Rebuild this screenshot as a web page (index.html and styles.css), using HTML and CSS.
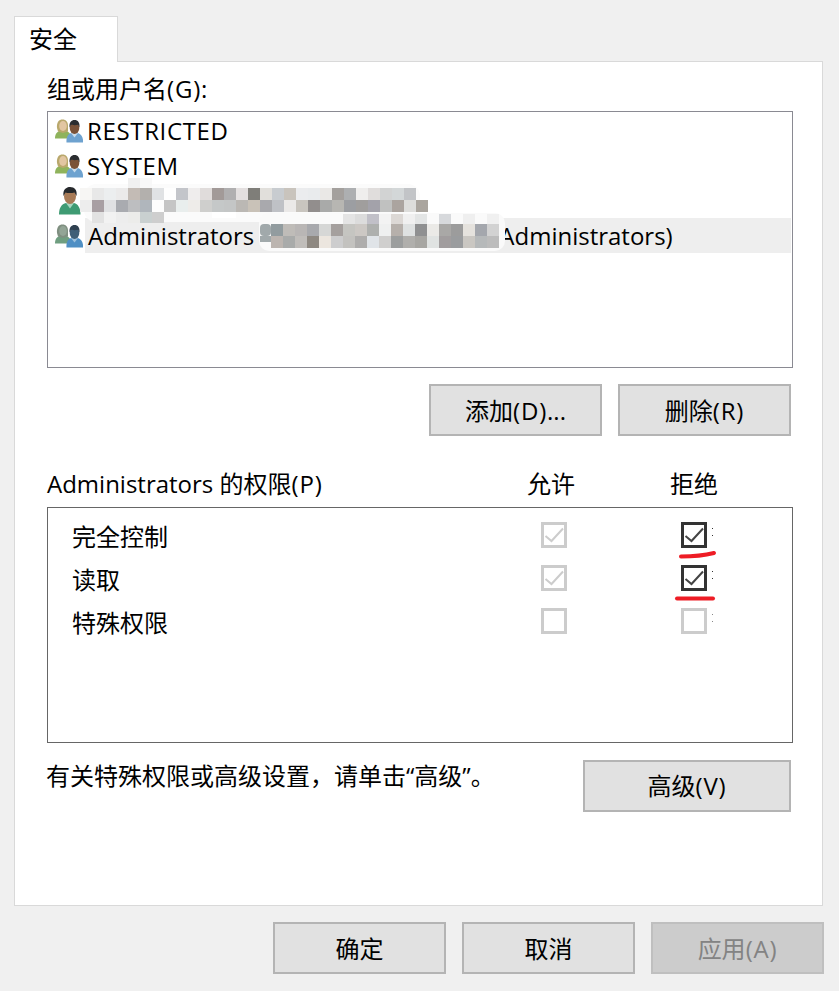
FILE: index.html
```html
<!DOCTYPE html>
<html lang="zh-CN">
<head>
  <meta charset="UTF-8">
  <title>安全</title>
  <link rel="stylesheet" href="styles.css">
</head>
<body>

<svg class="defs" width="0" height="0">
  <symbol id="icon-group" viewBox="0 0 28 24">
    <path class="body-a" d="M0 19.500C0 15 2 12.500 5 12L11 12C14 12.500 16 15 16 19.500Z"/>
    <path class="hair-a" d="M2 9C1.500 3 4 .5 7.500 .5C11 .5 13.500 3 13 8L13 12.500L8 14L3 12.500Z"/>
    <ellipse class="skin-a" cx="8" cy="7" rx="3.800" ry="5"/>
    <path class="body-b" d="M11.500 23.500C11 18.500 13 15 16 14L23 14C26.500 15 28.500 19 28 23.500Z"/>
    <path class="collar-b" d="M16 14L19.500 18.500L23 14Z"/>
    <ellipse class="skin-b" cx="19.500" cy="9" rx="4.800" ry="6"/>
    <path class="hair-b" d="M14.500 8.500C14 3 16.500 1 19.500 1C23 1 25 3.500 24.500 8.500L23 5.800C20 6.500 17 6 16 5.800Z"/>
  </symbol>
  <symbol id="icon-user" viewBox="0 0 22 28">
    <path d="M0 27.500C0 21 2.500 17 7 16L15 16C19 17 21.500 21 21.500 27.500Z" fill="#3f9b73"/>
    <path d="M7 16L11 21.500L15 16Z" fill="#a9d6bf"/>
    <ellipse cx="11" cy="9.500" rx="6" ry="7.500" fill="#a87b57"/>
    <path d="M4.500 9C3.500 2.500 7.500 0 11 0C15.500 0 18.500 3 17.500 9L15.500 5.500C12 6.500 8 6 6.500 5.500Z" fill="#26292c"/>
  </symbol>
</svg>

<div class="window">
  <div class="tabs">
    <div class="tab">安全</div>
  </div>

  <div class="panel">
    <div class="label">组或用户名<span class="key">(G)</span>:</div>

    <div class="listbox">
      <div class="row">
        <svg class="icon"><use href="#icon-group"/></svg>
        <span class="caps">RESTRICTED</span>
      </div>
      <div class="row">
        <svg class="icon"><use href="#icon-group"/></svg>
        <span class="caps">SYSTEM</span>
      </div>
      <div class="row">
        <svg class="icon-single"><use href="#icon-user"/></svg>
      </div>
      <div class="row selected">
        <svg class="icon dimmed"><use href="#icon-group"/></svg>
        <span class="name">Administrators</span>
        <span class="name-tail">Administrators)</span>
      </div>

      <!-- mosaic over the user names, coordinates are page pixels -->
      <svg class="mosaic" width="745" height="255" viewBox="48 112 745 255" shape-rendering="crispEdges">
        <rect x="84" y="184" width="336" height="38" rx="12" fill="#fbfbfb" shape-rendering="auto"/>
        <rect x="259" y="213" width="246" height="38" rx="10" fill="#fafafa" shape-rendering="auto"/>
        <rect x="128" y="178" width="12" height="10" fill="#f0f0f0"/>
        <rect x="140" y="178" width="12" height="10" fill="#f8f8f8"/>
        <g>
          <rect x="80" y="188" width="12" height="12" fill="#f7f6f4"/>
          <rect x="92" y="188" width="12" height="12" fill="#e8e8e8"/>
          <rect x="104" y="188" width="12" height="12" fill="#eceeef"/>
          <rect x="116" y="188" width="12" height="12" fill="#ebeaea"/>
          <rect x="128" y="188" width="12" height="12" fill="#c3bbb5"/>
          <rect x="140" y="188" width="12" height="12" fill="#b3b0ad"/>
          <rect x="152" y="188" width="12" height="12" fill="#e0e2e4"/>
          <rect x="164" y="188" width="12" height="12" fill="#fefefe"/>
          <rect x="176" y="188" width="12" height="12" fill="#c3c5ca"/>
          <rect x="188" y="188" width="12" height="12" fill="#efeded"/>
          <rect x="200" y="188" width="12" height="12" fill="#e0dcdb"/>
          <rect x="212" y="188" width="12" height="12" fill="#a29a98"/>
          <rect x="224" y="188" width="12" height="12" fill="#b0afb0"/>
          <rect x="236" y="188" width="12" height="12" fill="#e3dfdf"/>
          <rect x="248" y="188" width="12" height="12" fill="#7f7e79"/>
          <rect x="260" y="188" width="12" height="12" fill="#e1dfdb"/>
          <rect x="272" y="188" width="12" height="12" fill="#c8ccd0"/>
          <rect x="284" y="188" width="12" height="12" fill="#c9c4bd"/>
          <rect x="296" y="188" width="12" height="12" fill="#ebecee"/>
          <rect x="308" y="188" width="12" height="12" fill="#e9ebed"/>
          <rect x="320" y="188" width="12" height="12" fill="#eae8e6"/>
          <rect x="332" y="188" width="12" height="12" fill="#a4a09d"/>
          <rect x="344" y="188" width="12" height="12" fill="#adafb1"/>
          <rect x="356" y="188" width="12" height="12" fill="#efeeed"/>
          <rect x="368" y="188" width="12" height="12" fill="#e0dddc"/>
          <rect x="380" y="188" width="12" height="12" fill="#d2d3d3"/>
          <rect x="392" y="188" width="12" height="12" fill="#d3d7d8"/>
          <rect x="404" y="188" width="12" height="12" fill="#c2c4c7"/>
        </g>
        <g>
          <rect x="80" y="200" width="12" height="12" fill="#ededed"/>
          <rect x="92" y="200" width="12" height="12" fill="#a89fa3"/>
          <rect x="104" y="200" width="12" height="12" fill="#e0e1e3"/>
          <rect x="116" y="200" width="12" height="12" fill="#a9abb0"/>
          <rect x="128" y="200" width="12" height="12" fill="#bdbec0"/>
          <rect x="140" y="200" width="12" height="12" fill="#b0b6bc"/>
          <rect x="152" y="200" width="12" height="12" fill="#fdfdfd"/>
          <rect x="164" y="200" width="12" height="12" fill="#c5c5c5"/>
          <rect x="176" y="200" width="12" height="12" fill="#e9eeed"/>
          <rect x="188" y="200" width="12" height="12" fill="#eeece9"/>
          <rect x="200" y="200" width="12" height="12" fill="#cfcfcd"/>
          <rect x="212" y="200" width="12" height="12" fill="#c5c8c8"/>
          <rect x="224" y="200" width="12" height="12" fill="#c4c6c6"/>
          <rect x="236" y="200" width="12" height="12" fill="#bbb8b4"/>
          <rect x="248" y="200" width="12" height="12" fill="#c9c2b8"/>
          <rect x="260" y="200" width="12" height="12" fill="#a9a9ad"/>
          <rect x="272" y="200" width="12" height="12" fill="#bfc1c6"/>
          <rect x="284" y="200" width="12" height="12" fill="#ebe9e8"/>
          <rect x="296" y="200" width="12" height="12" fill="#c9c5bf"/>
          <rect x="308" y="200" width="12" height="12" fill="#928e8d"/>
          <rect x="320" y="200" width="12" height="12" fill="#a9aaa9"/>
          <rect x="332" y="200" width="12" height="12" fill="#b7b6b2"/>
          <rect x="344" y="200" width="12" height="12" fill="#9c9ea2"/>
          <rect x="356" y="200" width="12" height="12" fill="#a09e9d"/>
          <rect x="368" y="200" width="12" height="12" fill="#a3a2aa"/>
          <rect x="380" y="200" width="12" height="12" fill="#c0c1c0"/>
          <rect x="392" y="200" width="12" height="12" fill="#aba49f"/>
          <rect x="404" y="200" width="12" height="12" fill="#dddddb"/>
          <rect x="416" y="200" width="12" height="12" fill="#aaa59e"/>
        </g>
        <g>
          <rect x="92" y="212" width="12" height="11" fill="#e2e2e2"/>
          <rect x="104" y="212" width="12" height="11" fill="#f2f2f2"/>
          <rect x="116" y="212" width="12" height="11" fill="#ededed"/>
          <rect x="128" y="212" width="12" height="11" fill="#ececea"/>
          <rect x="140" y="212" width="12" height="11" fill="#c9d0d0"/>
          <rect x="152" y="212" width="12" height="11" fill="#cecece"/>
          <rect x="212" y="212" width="24" height="6" fill="#ffffff"/>
        </g>
        <g>
          <rect x="343" y="214" width="12" height="10" fill="#e4e4e4"/>
          <rect x="355" y="214" width="12" height="10" fill="#dcdcdc"/>
          <rect x="367" y="214" width="12" height="10" fill="#c1c0c8"/>
          <rect x="379" y="214" width="12" height="10" fill="#f3f3f3"/>
          <rect x="391" y="214" width="12" height="10" fill="#dcd8d5"/>
          <rect x="403" y="214" width="12" height="10" fill="#f0f0f0"/>
          <rect x="415" y="214" width="12" height="10" fill="#e3e5e5"/>
          <rect x="439" y="214" width="12" height="10" fill="#d7d9dc"/>
          <rect x="463" y="214" width="12" height="10" fill="#efefef"/>
          <rect x="487" y="214" width="12" height="10" fill="#f0f0f0"/>
        </g>
        <g>
          <rect x="260" y="224" width="11" height="12" rx="4" fill="#a1a9ab" shape-rendering="auto"/>
          <rect x="271" y="224" width="12" height="12" fill="#929c9f"/>
          <rect x="283" y="224" width="12" height="12" fill="#bfbcb8"/>
          <rect x="295" y="224" width="12" height="12" fill="#b9b6b5"/>
          <rect x="307" y="224" width="12" height="12" fill="#a8a9ad"/>
          <rect x="319" y="224" width="12" height="12" fill="#d6d7d6"/>
          <rect x="331" y="224" width="12" height="12" fill="#a5a09e"/>
          <rect x="343" y="224" width="12" height="12" fill="#c5c5c1"/>
          <rect x="355" y="224" width="12" height="12" fill="#ccc8c4"/>
          <rect x="367" y="224" width="12" height="12" fill="#aeb0ae"/>
          <rect x="379" y="224" width="12" height="12" fill="#eff0f0"/>
          <rect x="391" y="224" width="12" height="12" fill="#b6b0ab"/>
          <rect x="403" y="224" width="12" height="12" fill="#dee1e1"/>
          <rect x="415" y="224" width="12" height="12" fill="#8f9091"/>
          <rect x="427" y="224" width="12" height="12" fill="#ebeae7"/>
          <rect x="439" y="224" width="12" height="12" fill="#a9a8a6"/>
          <rect x="451" y="224" width="12" height="12" fill="#9c9c9c"/>
          <rect x="463" y="224" width="12" height="12" fill="#e5e2dd"/>
          <rect x="475" y="224" width="12" height="12" fill="#a4a7ad"/>
          <rect x="487" y="224" width="12" height="12" fill="#d2d2d2"/>
        </g>
        <g>
          <rect x="260" y="236" width="11" height="6" fill="#a1a9ab"/>
          <rect x="271" y="236" width="12" height="12" fill="#bcb5b0"/>
          <rect x="283" y="236" width="12" height="12" fill="#a9abaa"/>
          <rect x="295" y="236" width="12" height="12" fill="#c0bdba"/>
          <rect x="307" y="236" width="12" height="12" fill="#8e8881"/>
          <rect x="319" y="236" width="12" height="12" fill="#ece6df"/>
          <rect x="331" y="236" width="12" height="12" fill="#cdcdce"/>
          <rect x="343" y="236" width="12" height="12" fill="#c3c2bf"/>
          <rect x="355" y="236" width="12" height="12" fill="#aeadac"/>
          <rect x="367" y="236" width="12" height="12" fill="#e0e4e8"/>
          <rect x="379" y="236" width="12" height="12" fill="#d0cfce"/>
          <rect x="391" y="236" width="12" height="12" fill="#9c9e9e"/>
          <rect x="403" y="236" width="12" height="12" fill="#b0afac"/>
          <rect x="415" y="236" width="12" height="12" fill="#a7a6a2"/>
          <rect x="427" y="236" width="12" height="12" fill="#e0e3e2"/>
          <rect x="439" y="236" width="12" height="12" fill="#a19d9e"/>
          <rect x="451" y="236" width="12" height="12" fill="#9a9c9e"/>
          <rect x="463" y="236" width="12" height="12" fill="#cac7c2"/>
          <rect x="475" y="236" width="12" height="12" fill="#b6b9ba"/>
          <rect x="487" y="236" width="12" height="12" fill="#bcbcbc"/>
        </g>
      </svg>
    </div>

    <div class="actions">
      <button class="btn">添加<span class="key">(D)</span>...</button>
      <button class="btn">删除<span class="key">(R)</span></button>
    </div>

    <div class="perm-head">
      <span>Administrators 的权限<span class="key">(P)</span></span>
      <span>允许</span>
      <span>拒绝</span>
    </div>

    <div class="perm-box">
      <div class="perm-row">
        <span class="perm-name">完全控制</span>
        <span class="check off"><svg viewBox="0 0 20 20"><path d="M1.500 11L7.500 16L19 3.500"/></svg></span>
        <span class="check on"><svg viewBox="0 0 20 20"><path d="M1.500 11L7.500 16L19 3.500"/></svg></span>
        <span class="dots"></span>
      </div>
      <div class="perm-row">
        <span class="perm-name">读取</span>
        <span class="check off"><svg viewBox="0 0 20 20"><path d="M1.500 11L7.500 16L19 3.500"/></svg></span>
        <span class="check on"><svg viewBox="0 0 20 20"><path d="M1.500 11L7.500 16L19 3.500"/></svg></span>
        <span class="dots"></span>
      </div>
      <div class="perm-row">
        <span class="perm-name">特殊权限</span>
        <span class="check off"></span>
        <span class="check off"></span>
        <span class="dots faint"></span>
      </div>

      <!-- red marks drawn over the screenshot -->
      <svg class="marks" width="745" height="235" viewBox="48 508 745 235">
        <path d="M681 556.500C693 556.500 704 555.500 714 553" fill="none" stroke="#ee1c25" stroke-width="4" stroke-linecap="round"/>
        <path d="M677 598.500L713 598.500" fill="none" stroke="#ee1c25" stroke-width="4" stroke-linecap="round"/>
      </svg>
    </div>

    <div class="advanced">
      <span class="advanced-text">有关特殊权限或高级设置，请单击“高级”。</span>
      <button class="btn wide">高级<span class="key">(V)</span></button>
    </div>
  </div>

  <div class="footer">
    <button class="btn">确定</button>
    <button class="btn">取消</button>
    <button class="btn disabled">应用<span class="key">(A)</span></button>
  </div>
</div>

</body>
</html>
```

FILE: styles.css
```css
html, body {
  margin: 0;
  height: 991px;
  overflow: hidden;
}
body {
  font-family: "Open Sans", "Noto Sans CJK SC", sans-serif;
  font-size: 24px;
  color: #000;
  background: #f0f0f0;
}
.defs {
  position: absolute;
}
.window {
  padding: 16px 15px 0 14px;
}
.tabs {
  display: flex;
}
.tab {
  position: relative;
  z-index: 1;
  width: 88px;
  height: 45px;
  padding-left: 14px;
  line-height: 43px;
  background: #fff;
  border: 1px solid #d9d9d9;
  border-bottom: none;
  margin-bottom: -1px;
}
.panel {
  height: 845px;
  box-sizing: border-box;
  margin-right: 1px;
  padding: 10px 29px 0 32px;
  background: #fff;
  border: 1px solid #d9d9d9;
}
.label {
  line-height: 34px;
  margin-bottom: 5px;
}
.key {
  letter-spacing: .8px;
}
.listbox {
  position: relative;
  height: 257px;
  box-sizing: border-box;
  padding-top: 1px;
  border: 1px solid #8a8a92;
}
.row {
  display: flex;
  align-items: center;
  height: 35px;
  padding-left: 7px;
  line-height: 35px;
  white-space: nowrap;
}
.row .icon {
  width: 28px;
  height: 24px;
  margin-right: 5px;
  flex: none;
}
.row .icon-single {
  width: 22px;
  height: 28px;
  margin-left: 4px;
}
.caps {
  margin-left: -1px;
  letter-spacing: .65px;
}
.icon {
  --body-a: #8fb35c;
  --hair-a: #b9a86c;
  --skin-a: #e2c6a2;
  --body-b: #6ea2cf;
  --collar-b: #c9dcec;
  --skin-b: #7a5238;
  --hair-b: #2b2d30;
}
.icon.dimmed {
  --body-a: #6f9e80;
  --hair-a: #7f8f80;
  --skin-a: #93a596;
  --body-b: #4f8fc4;
  --collar-b: #9cc0dc;
  --skin-b: #3f5f78;
  --hair-b: #2f4050;
}
.body-a { fill: var(--body-a); }
.hair-a { fill: var(--hair-a); }
.skin-a { fill: var(--skin-a); }
.body-b { fill: var(--body-b); }
.collar-b { fill: var(--collar-b); }
.skin-b { fill: var(--skin-b); }
.hair-b { fill: var(--hair-b); }
.selected {
  background: linear-gradient(to right, transparent 37px, #eee 37px);
  margin-right: 1px;
}
.name-tail {
  margin-left: 245px;
}
.mosaic {
  position: absolute;
  left: 0;
  top: 0;
}
.actions {
  display: flex;
  justify-content: flex-end;
  gap: 16px;
  margin-top: 16px;
  padding-right: 2px;
}
.btn {
  width: 173px;
  height: 52px;
  padding: 0 0 1px;
  font: inherit;
  color: #000;
  background: #e1e1e1;
  border: 2px solid #b4b4b4;
}
.btn.wide {
  width: 208px;
}
.btn.disabled {
  color: #838383;
  background: #ccc;
  border-color: #bfbfbf;
}
.perm-head {
  display: grid;
  grid-template-columns: 480px 143px auto;
  margin-top: 31px;
  margin-bottom: 6px;
  line-height: 34px;
}
.perm-box {
  position: relative;
  height: 236px;
  box-sizing: border-box;
  padding-top: 6px;
  border: 1px solid #666;
}
.perm-row {
  display: grid;
  grid-template-columns: 493px 140px 26px 8px;
  align-items: start;
  height: 43px;
}
.perm-name {
  padding-left: 24px;
  padding-top: 6px;
  line-height: 34px;
}
.check {
  display: block;
  width: 26px;
  height: 26px;
  margin-top: 8px;
  box-sizing: border-box;
  border: 3px solid #333;
  background: #fff;
}
.check svg {
  display: block;
  width: 20px;
  height: 20px;
  fill: none;
  stroke: #444;
  stroke-width: 2;
}
.check.off {
  border-color: #ccc;
}
.check.off svg {
  stroke: #ccc;
}
.dots {
  width: 1px;
  height: 6px;
  margin-left: 5px;
  margin-top: 14px;
  border-top: 1px solid #333;
  border-bottom: 1px solid #333;
}
.dots.faint {
  border-color: #888;
}
.marks {
  position: absolute;
  left: 0;
  top: 0;
}
.advanced {
  display: flex;
  justify-content: space-between;
  align-items: flex-start;
  margin-top: 17px;
  padding-right: 2px;
  line-height: 32px;
}
.advanced-text {
  margin-left: -1px;
}
.footer {
  display: flex;
  justify-content: flex-end;
  gap: 16px;
  margin-top: 16px;
}
```
